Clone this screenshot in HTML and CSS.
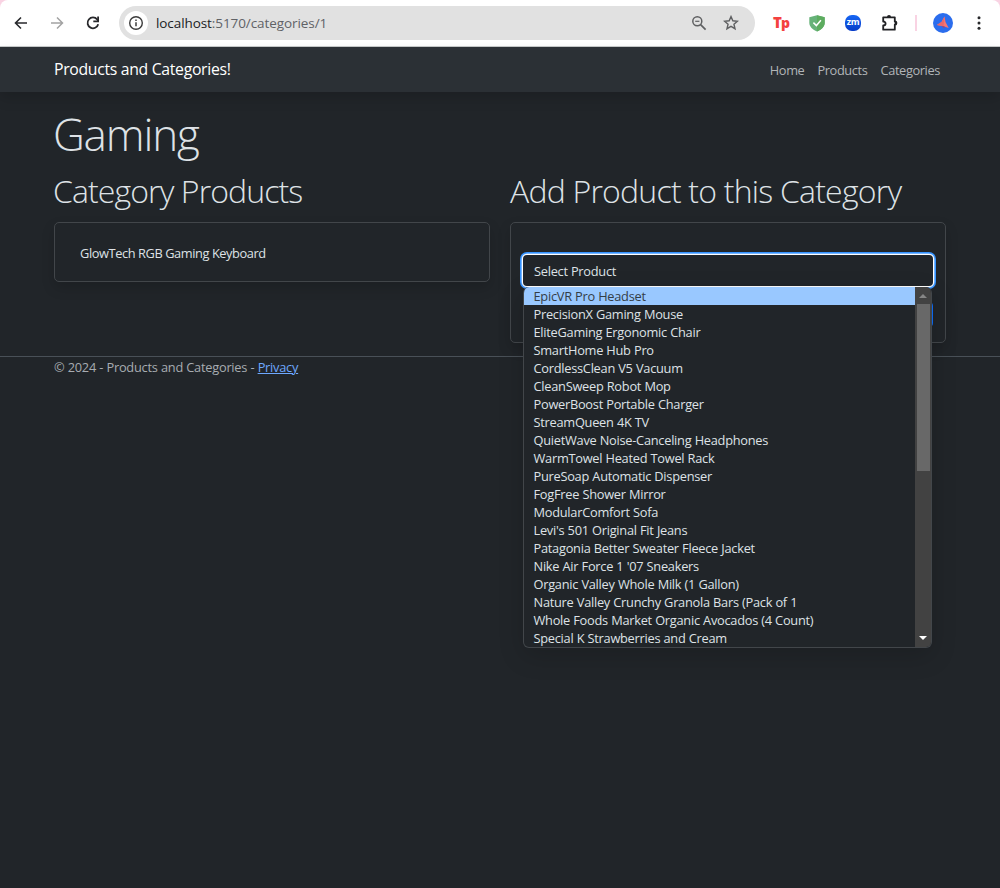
FILE: index.html
```html
<!DOCTYPE html>
<html lang="en">
<head>
<meta charset="utf-8">
<title>Gaming - Products and Categories</title>
<link rel="stylesheet" href="styles.css">
</head>
<body>
<div class="browser-bar">
  <svg class="tool back" viewBox="0 0 16 16"><path d="M14 8H3M8 2.500 2.500 8 8 13.500" fill="none" stroke="#28292c" stroke-width="1.600"/></svg>
  <svg class="tool forward" viewBox="0 0 16 16"><path d="M2 8h11M8 2.500 13.500 8 8 13.500" fill="none" stroke="#a3a3a3" stroke-width="1.500"/></svg>
  <svg class="tool reload" viewBox="0 0 16 16"><path d="M13.200 9.200A5.400 5.400 0 1 1 12.200 4.500L13.500 6" fill="none" stroke="#28292c" stroke-width="1.800"/><path d="M14 1.500v5.700H8.300V5.600h3.900V1.500z" fill="#28292c"/></svg>
  <div class="address">
    <span class="site-info"><svg viewBox="0 0 16 16"><circle cx="8" cy="8" r="6.300" fill="none" stroke="#3c3c3c" stroke-width="1.400"/><path d="M8 7.200v4M8 4.600v1.500" stroke="#3c3c3c" stroke-width="1.500"/></svg></span>
    <span class="url">localhost<span class="url-rest">:5170/categories/1</span></span>
    <svg class="zoom-icon" viewBox="0 0 16 16"><g fill="none" stroke="#5f6062"><circle cx="6.300" cy="6.300" r="4.500" stroke-width="1.500"/><path d="m9.600 9.600 5 5" stroke-width="1.700"/><path d="M4.200 6.300h4.200" stroke-width="1.200"/></g></svg>
    <svg class="star-icon" viewBox="0 0 16 16"><path d="m8 1.600 1.850 4.200 4.600.4-3.500 3.020 1.050 4.480L8 11.320 4 13.700l1.050-4.480-3.500-3.020 4.600-.4z" fill="none" stroke="#5f6062" stroke-width="1.400"/></svg>
  </div>
  <span class="ext-tp"><span>T</span><span class="tp-low">p</span></span>
  <svg class="ext-shield" viewBox="0 0 16 17"><path d="M8 .300 15.700 2.200v5.600c0 4-3.400 7-7.700 8.700C3.700 14.800.300 11.800.300 7.800V2.200z" fill="#67b279"/><path d="M8 .300 15.700 2.200v5.600c0 4-3.400 7-7.700 8.700z" fill="#5dac5f"/><path d="m4.400 7.600 3 3 4.500-5.300" fill="none" stroke="#fff" stroke-width="1.500"/></svg>
  <span class="ext-zoom">zm</span>
  <svg class="ext-puzzle" viewBox="0 0 18 18"><path d="M2.200 3.300h11.600v4.400h1v2.700h-1v5.300H2.200v-4.200c3.200 0 3.200-4 0-4z" fill="none" stroke="#202124" stroke-width="1.800" stroke-linejoin="round"/><path d="M6 3a2 2 0 0 1 4 0zM14.300 7a2 2 0 0 1 0 4.200z" fill="#202124"/></svg>
  <span class="divider"></span>
  <svg class="avatar" viewBox="0 0 20 20"><circle cx="10" cy="10" r="10" fill="#2b6ded"/><path d="M11.500 3.500 12.500 9 15.700 15 10.500 13.200 3.800 12 8.500 9z" fill="#fa756f"/><path d="M11.500 3.500 10.500 13.200 3.800 12 8.500 9z" fill="#e9686b"/><path d="m8.700 12.900 2.500 2.400.4-1.800z" fill="#b83b5e"/></svg>
  <svg class="more" viewBox="0 0 4 16"><g fill="#28292c"><circle cx="2" cy="2.700" r="1.500"/><circle cx="2" cy="8" r="1.500"/><circle cx="2" cy="13.300" r="1.500"/></g></svg>
</div>
<header class="navbar">
  <a class="brand">Products and Categories!</a>
  <nav class="links"><a>Home</a><a>Products</a><a>Categories</a></nav>
</header>
<main class="container">
  <h1>Gaming</h1>
  <div class="columns">
    <section>
      <h2>Category Products</h2>
      <div class="card product-card"><span>GlowTech RGB Gaming Keyboard</span></div>
    </section>
    <section>
      <h2 class="heading-add">Add Product to this Category</h2>
      <div class="card form-card">
        <div class="select">
          <span>Select Product</span>
          <div class="dropdown">
            <ul class="options">
              <li class="active">EpicVR Pro Headset</li>
              <li>PrecisionX Gaming Mouse</li>
              <li>EliteGaming Ergonomic Chair</li>
              <li>SmartHome Hub Pro</li>
              <li>CordlessClean V5 Vacuum</li>
              <li>CleanSweep Robot Mop</li>
              <li>PowerBoost Portable Charger</li>
              <li>StreamQueen 4K TV</li>
              <li>QuietWave Noise-Canceling Headphones</li>
              <li>WarmTowel Heated Towel Rack</li>
              <li>PureSoap Automatic Dispenser</li>
              <li>FogFree Shower Mirror</li>
              <li>ModularComfort Sofa</li>
              <li>Levi's 501 Original Fit Jeans</li>
              <li>Patagonia Better Sweater Fleece Jacket</li>
              <li>Nike Air Force 1 '07 Sneakers</li>
              <li>Organic Valley Whole Milk (1 Gallon)</li>
              <li>Nature Valley Crunchy Granola Bars (Pack of 1</li>
              <li>Whole Foods Market Organic Avocados (4 Count)</li>
              <li>Special K Strawberries and Cream</li>
            </ul>
            <div class="scrollbar"><span class="arrow-up"></span><span class="thumb"></span><span class="arrow-down"></span></div>
          </div>
        </div>
        <div class="submit"></div>
      </div>
    </section>
  </div>
</main>
<footer class="footer">© 2024 - Products and Categories - <a>Privacy</a></footer>
</body>
</html>
```
FILE: styles.css
```css
* { box-sizing: border-box; }
body {
  margin: 0;
  height: 888px;
  overflow: hidden;
  background: #212529;
  color: #dee2e6;
  font: 12.8px/19.2px "Open Sans", "Noto Sans", sans-serif;
  letter-spacing: -0.25px;
  white-space: nowrap;
}
h1, h2, ul { margin: 0; padding: 0; font-weight: 300; }
svg { display: block; flex: none; }

.browser-bar {
  display: flex;
  align-items: center;
  height: 47px;
  padding-left: 13px;
  border-bottom: 1px solid #c8cbcb;
  border-radius: 8px 8px 0 0;
  background: #fff;
  box-shadow: 0 -8px 0 8px #f9d3e3;
}
.tool { width: 16px; height: 16px; }
.forward, .reload { margin-left: 20px; }
.address {
  display: flex;
  align-items: center;
  width: 636px;
  height: 34px;
  margin-left: 18px;
  padding-left: 5px;
  border-radius: 17px;
  background: #e1e1e1;
}
.site-info {
  display: grid;
  place-items: center;
  width: 24px;
  height: 24px;
  border-radius: 50%;
  background: #fff;
}
.site-info svg { width: 16px; height: 16px; }
.url { width: 535px; margin-left: 8px; padding-top: 1px; font-size: 13.5px; letter-spacing: -0.08px; color: #202124; }
.url-rest { color: #606266; }
.zoom-icon, .star-icon { width: 16px; height: 16px; }
.star-icon { margin-left: 16px; }
.ext-tp { width: 17px; margin-left: 18px; color: #f4413f; font: 800 15px/18px "Open Sans", sans-serif; letter-spacing: -1px; padding-bottom: 2px; }
.tp-low { font-size: 14px; }
.ext-shield { width: 16px; height: 17px; margin-left: 19px; }
.ext-zoom {
  width: 16px;
  height: 16px;
  margin-left: 20px;
  border-radius: 7px;
  background: #0b5cff linear-gradient(#1767f4, #063bc8);
  color: #fff;
  font: 700 9px/14px "Open Sans", sans-serif;
  letter-spacing: -0.4px;
  text-align: center;
}
.ext-puzzle { width: 18px; height: 18px; margin-left: 20px; }
.divider { width: 2px; height: 16px; margin-left: 16px; background: #f9d3e3; }
.avatar { width: 20px; height: 20px; margin-left: 16px; }
.more { width: 4px; height: 16px; margin-left: 24px; }

.navbar {
  display: flex;
  align-items: center;
  justify-content: space-between;
  height: 45px;
  padding: 0 60px 0 54px;
  background: #2b3035;
  box-shadow: 0 6px 13px rgba(0, 0, 0, .15);
}
.brand { padding-top: 1px; color: #fff; font-size: 15.8px; letter-spacing: -0.32px; }
.links { display: flex; gap: 13px; padding-top: 2px; color: #b2b5b8; letter-spacing: -0.38px; }

.container { padding: 18px 54px 0; }
h1 { height: 64px; font-size: 44px; line-height: 48px; letter-spacing: -1.2px; margin-left: -1px; }
.columns { display: grid; grid-template-columns: 1fr 1fr; gap: 20px; }
h2 { height: 48px; margin-left: -1px; font-size: 32px; line-height: 33px; letter-spacing: -0.9px; }
.heading-add { margin-left: 0; letter-spacing: -0.78px; }
.card {
  border: 1px solid #42464a;
  border-radius: 5px;
  box-shadow: 0 6px 13px rgba(0, 0, 0, .15);
}
.product-card { height: 60px; padding: 21px 25px; letter-spacing: -0.41px; }
.form-card { height: 121px; padding: 32px 12px 0; }
.select {
  position: relative;
  height: 31px;
  padding: 7px 11px;
  border-radius: 4px;
  background: #212529;
  box-shadow: 0 0 0 1px #fff, 0 0 0 1.500px #b5d7ff, 0 0 0 3px #3593ff;
}
.submit { height: 27px; margin-top: 15px; border-radius: 5px; background: #0d6efd; }
.dropdown {
  position: absolute;
  z-index: 1;
  top: 32px;
  left: 0;
  display: flex;
  width: 409px;
  height: 361px;
  overflow: hidden;
  border: solid #42464a;
  border-width: 0 1px 1px;
  border-radius: 6px;
  background: #212529;
  box-shadow: 0 8px 26px rgba(0, 0, 0, .16);
}
.options { flex: 1; list-style: none; font-weight: 400; letter-spacing: -0.26px; word-spacing: 0.2px; }
.options li { height: 18px; padding-left: 9.500px; line-height: 18px; }
.options .active { background: #99c8ff; color: #343d46; }
.scrollbar { display: flex; flex-direction: column; align-items: center; width: 16px; background: #424242; }
.arrow-up { margin-top: 7px; border: solid transparent; border-width: 0 4px 4px; border-bottom-color: #868686; }
.thumb { width: 13px; height: 167px; margin-top: 6px; background: #686868; }
.arrow-down { margin: auto 0 7px; border: solid transparent; border-width: 4px 4px 0; border-top-color: #fff; }

.footer { margin-top: 13px; padding: 1px 54px; border-top: 1px solid #495057; color: #a7acb1; letter-spacing: -0.24px; word-spacing: 0.2px; }
.footer a { color: #6ea8fe; text-decoration: underline; }
```
